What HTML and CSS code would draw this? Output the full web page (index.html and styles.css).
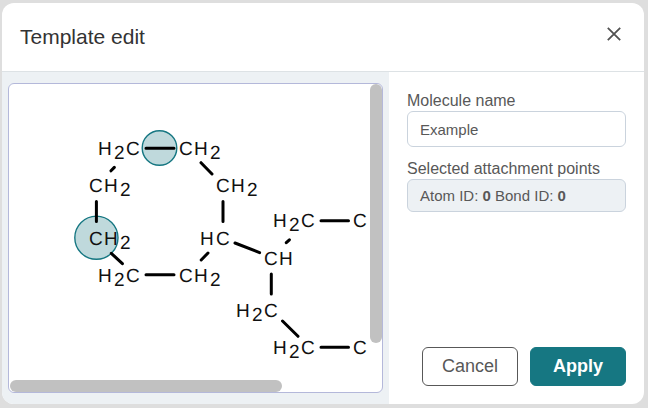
FILE: index.html
```html
<!DOCTYPE html>
<html lang="en">
<head>
<meta charset="utf-8">
<title>Template edit</title>
<link rel="stylesheet" href="styles.css">
</head>
<body>
<section class="dialog" role="dialog" aria-labelledby="dialog-title">
  <header class="header">
    <h1 class="title" id="dialog-title">Template edit</h1>
    <button class="close" type="button" aria-label="Close">
      <svg width="16" height="16" viewBox="0 0 16 16"><path d="M1.8 1.8L14.2 14.2M14.2 1.8L1.8 14.2"/></svg>
    </button>
  </header>
  <div class="content">
    <div class="preview">
      <div class="canvas">
        <svg class="molecule" width="361" height="296" viewBox="9 84 361 296">
          <g class="selection">
            <circle cx="159.5" cy="148" r="17.3"/>
            <circle cx="96.4" cy="237.7" r="21.6"/>
          </g>
          <path class="bonds" d="M146 148.3H174M111 170.8L114.3 167.4M201 162.7L212 174M96.4 201.5V221.5M223 201.5V221.5M111.3 253.3L122.4 263.7M146 274.7H174M201.2 260L208 253M235 243L259.6 252.6M286.3 242.7L289.4 239.8M321 220.7H348.5M271.3 274V294M282.5 321L298 336.3M321 347.3H348.5"/>
          <g class="atoms">
            <text y="155"><tspan x="98">H</tspan><tspan x="114" dy="4">2</tspan><tspan x="126" dy="-4">C</tspan></text>
            <text y="155"><tspan x="179">C</tspan><tspan x="194">H</tspan><tspan x="210" dy="4">2</tspan></text>
            <text y="192"><tspan x="89">C</tspan><tspan x="104">H</tspan><tspan x="120" dy="4">2</tspan></text>
            <text y="192"><tspan x="216">C</tspan><tspan x="231">H</tspan><tspan x="247" dy="4">2</tspan></text>
            <text y="245"><tspan x="89">C</tspan><tspan x="104">H</tspan><tspan x="120" dy="4">2</tspan></text>
            <text y="245"><tspan x="200">H</tspan><tspan x="216">C</tspan></text>
            <text y="282"><tspan x="98">H</tspan><tspan x="114" dy="4">2</tspan><tspan x="126" dy="-4">C</tspan></text>
            <text y="282"><tspan x="179">C</tspan><tspan x="194">H</tspan><tspan x="210" dy="4">2</tspan></text>
            <text y="227"><tspan x="273">H</tspan><tspan x="289" dy="4">2</tspan><tspan x="301" dy="-4">C</tspan></text>
            <text x="353" y="227">C</text>
            <text y="265"><tspan x="264">C</tspan><tspan x="279">H</tspan></text>
            <text y="317"><tspan x="236">H</tspan><tspan x="252" dy="4">2</tspan><tspan x="264" dy="-4">C</tspan></text>
            <text y="354"><tspan x="273">H</tspan><tspan x="289" dy="4">2</tspan><tspan x="301" dy="-4">C</tspan></text>
            <text x="353" y="354">C</text>
          </g>
        </svg>
        <div class="thumb thumb-vertical"></div>
        <div class="thumb thumb-horizontal"></div>
      </div>
    </div>
    <form class="settings">
      <label class="label" for="name">Molecule name</label>
      <input class="field" id="name" type="text" value="Example">
      <div class="label">Selected attachment points</div>
      <div class="points">Atom ID: <b>0</b> Bond ID: <b>0</b></div>
      <div class="actions">
        <button class="button" type="button">Cancel</button>
        <button class="button primary" type="button">Apply</button>
      </div>
    </form>
  </div>
</section>
</body>
</html>
```

FILE: styles.css
```css
* {
  box-sizing: border-box;
}

body {
  margin: 0;
  min-height: 100vh;
  padding: 3px 4px 4px 2px;
  display: flex;
  background: #dedede;
  font-family: "Liberation Sans", Arial, sans-serif;
  color: #585858;
}

.dialog {
  flex: 1;
  display: flex;
  flex-direction: column;
  background: #fff;
  border-radius: 12px;
  overflow: hidden;
}

.header {
  display: flex;
  align-items: center;
  justify-content: space-between;
  padding: 20px 20px 20px 18px;
  border-bottom: 1px solid #dde2e5;
}

.title {
  margin: 0;
  font-size: 21px;
  line-height: 28px;
  font-weight: 400;
  color: #333;
}

.close {
  display: flex;
  padding: 0 2px 6px;
  border: 0;
  background: none;
}

.close path {
  stroke: #525252;
  stroke-width: 1.8;
  fill: none;
}

.content {
  flex: 1;
  display: grid;
  grid-template-columns: minmax(0, 3fr) minmax(255px, 1fr);
}

.preview {
  display: flex;
  padding: 11px 6px 11px 6px;
  background: #edf1f4;
}

.canvas {
  position: relative;
  flex: 1;
  overflow: hidden;
  background: #fff;
  border: 1px solid #b4b8da;
  border-radius: 6px;
}

.molecule {
  display: block;
}

.selection {
  fill: #bfd9dc;
  stroke: #167782;
  stroke-width: 1.4;
}

.bonds {
  stroke: #000;
  stroke-width: 3;
  stroke-linecap: round;
  fill: none;
}

.atoms {
  font-size: 19px;
  fill: #111;
  text-rendering: geometricPrecision;
}

.thumb {
  position: absolute;
  background: #c1c1c1;
  border-radius: 6px;
}

.thumb-vertical {
  top: 0;
  right: 0;
  width: 12px;
  height: 84%;
}

.thumb-horizontal {
  left: 1px;
  bottom: 0;
  width: 73%;
  height: 12px;
}

.settings {
  display: flex;
  flex-direction: column;
  padding: 18px;
}

.label {
  font-size: 16px;
  line-height: 21px;
}

.field,
.points {
  border: 1px solid #cad3dd;
  border-radius: 6px;
  padding: 0 12px;
  font-size: 15px;
  color: #585858;
}

.field {
  width: 100%;
  height: 36px;
  margin-bottom: 11px;
  background: #fff;
  font-family: inherit;
}

.points {
  line-height: 31px;
  background: #edf1f4;
}

.actions {
  display: flex;
  justify-content: flex-end;
  gap: 12px;
  margin-top: auto;
}

.button {
  width: 96px;
  height: 39px;
  border: 1px solid #585858;
  border-radius: 6px;
  background: #fff;
  color: #585858;
  font-family: inherit;
  font-size: 18px;
}

.primary {
  border-color: #167782;
  background: #167782;
  color: #fff;
  font-weight: 700;
}
```
